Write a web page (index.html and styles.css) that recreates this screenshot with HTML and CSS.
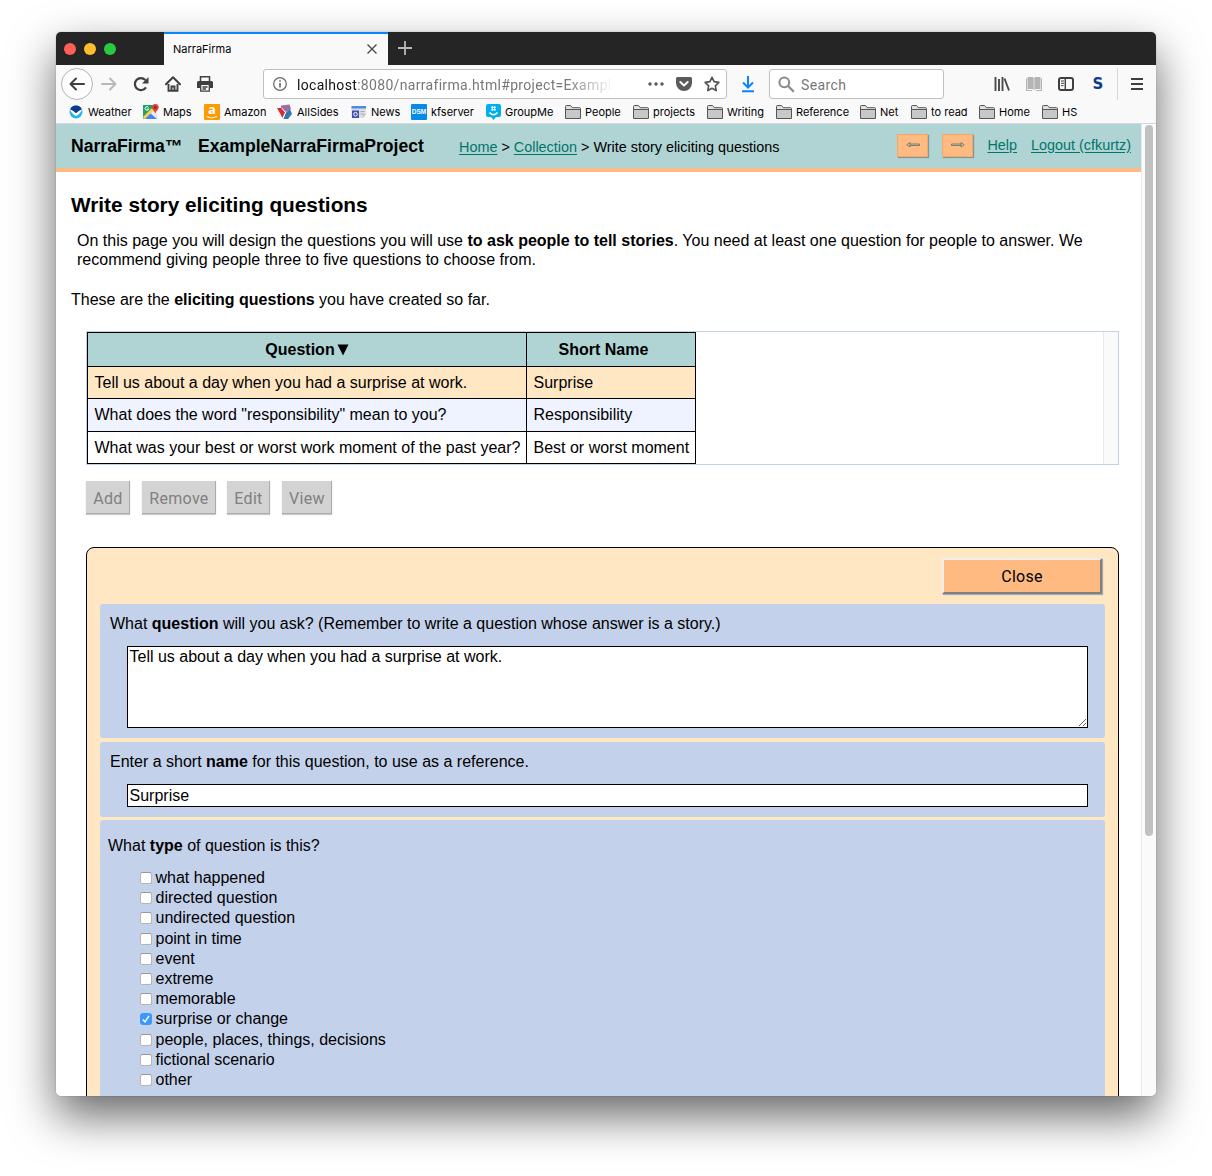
FILE: index.html
```html
<!DOCTYPE html>
<html lang="en">
<head>
<meta charset="utf-8">
<title>NarraFirma</title>
<link rel="stylesheet" href="styles.css">
</head>
<body>
<div class="window">
  <div class="tabbar">
    <div class="lights"><i class="red"></i><i class="yellow"></i><i class="green"></i></div>
    <div class="tab"><span>NarraFirma</span>
      <svg width="12" height="12" viewBox="0 0 12 12"><path d="M1.500 1.500l9 9m0-9l-9 9" stroke="#4a4a4a" stroke-width="1.400"/></svg>
    </div>
    <svg class="plus" width="14" height="14" viewBox="0 0 14 14"><path d="M7 0v14M0 7h14" stroke="#b9b9b9" stroke-width="1.800"/></svg>
  </div>

  <div class="toolbar">
    <div class="nav">
      <span class="back"><svg width="16" height="16" viewBox="0 0 16 16" fill="none" stroke="#3f3f3f" stroke-width="2" stroke-linecap="round" stroke-linejoin="round"><path d="M15 8H1.500M7 2.500L1.500 8 7 13.500"/></svg></span>
      <svg width="16" height="16" viewBox="0 0 16 16" fill="none" stroke="#b8b8b8" stroke-width="2" stroke-linecap="round" stroke-linejoin="round"><path d="M1 8h13.500M9 2.500L14.500 8 9 13.500"/></svg>
      <svg width="16" height="16" viewBox="0 0 16 16"><path d="M13 11.300A6 6 0 1 1 12.300 4" fill="none" stroke="#3f3f3f" stroke-width="2.200"/><path d="M15.500 1v6.500H9z" fill="#3f3f3f"/></svg>
      <svg width="16" height="16" viewBox="0 0 16 16"><path d="M1 8.300L8 1.300l7 7" fill="none" stroke="#3f3f3f" stroke-width="2" stroke-linecap="round" stroke-linejoin="round"/><path d="M3.500 8v6.700h9V8M6.500 15v-4.500h3V15" fill="none" stroke="#3f3f3f" stroke-width="1.900"/></svg>
      <svg width="16" height="16" viewBox="0 0 16 16"><path d="M3.500 5V.800h9V5" fill="none" stroke="#3f3f3f" stroke-width="1.500"/><path d="M1.500 5h13A1.500 1.500 0 0 1 16 6.500V12h-3V9H3v3H0V6.500A1.500 1.500 0 0 1 1.500 5z" fill="#3f3f3f"/><path d="M3.700 9v6.200h8.600V9M5.500 11h5M5.500 13h3.500" fill="none" stroke="#3f3f3f" stroke-width="1.300"/></svg>
    </div>
    <div class="urlbar">
      <svg width="14" height="14" viewBox="0 0 14 14"><circle cx="7" cy="7" r="6.300" fill="none" stroke="#666" stroke-width="1.200"/><path d="M7 6v4.500M7 3.200v1.600" stroke="#666" stroke-width="1.600"/></svg>
      <div class="url"><b>localhost</b>:8080/narrafirma.html#project=Exampl</div>
      <svg class="dots" width="16" height="16" viewBox="0 0 16 16" fill="#555"><circle cx="2" cy="8" r="1.700"/><circle cx="8" cy="8" r="1.700"/><circle cx="14" cy="8" r="1.700"/></svg>
      <svg class="pocket" width="16" height="16" viewBox="0 0 16 16"><path d="M1.500 1h13A1.500 1.500 0 0 1 16 2.500V7A8 8 0 0 1 0 7V2.500A1.500 1.500 0 0 1 1.500 1z" fill="#5b5b5b"/><path d="M4.300 6L8 9.500 11.700 6" fill="none" stroke="#fff" stroke-width="1.900" stroke-linecap="round" stroke-linejoin="round"/></svg>
      <svg width="16" height="16" viewBox="0 0 16 16"><path d="M8 1.300l2.100 4.400 4.700.700-3.400 3.400.800 4.800L8 12.300l-4.200 2.300.800-4.800L1.200 6.400l4.700-.700z" fill="none" stroke="#555" stroke-width="1.700" stroke-linejoin="round"/></svg>
    </div>
    <svg class="download" width="14" height="18" viewBox="0 0 14 18"><path d="M7 1v11M2 7.500l5 5 5-5M1 16.200h12" fill="none" stroke="#0a84ff" stroke-width="2"/></svg>
    <div class="search">
      <svg width="17" height="17" viewBox="0 0 17 17"><circle cx="6.300" cy="6.300" r="4.900" fill="none" stroke="#8a8a8a" stroke-width="2"/><path d="M10 10l5.800 5.800" stroke="#8a8a8a" stroke-width="2.200"/></svg>
      <span>Search</span>
    </div>
    <div class="tools">
      <svg width="16" height="16" viewBox="0 0 16 16"><path d="M1.500 1v14M5 3v12M8.500 1v14M10.500 2.500l4.500 12" stroke="#4a4a4a" stroke-width="1.900"/></svg>
      <svg width="16" height="16" viewBox="0 0 16 16" fill="#b4b4b4"><path d="M1.500 1h5L8 2l1.500-1h5v12H9.500L8 14.500 6.500 13h-5zM0 2.500h1V14h5v1H0zM16 2.500h-1V14h-5v1h6z"/><path d="M7.600 2.500h.800v12h-.800z" fill="#eee"/></svg>
      <svg width="16" height="16" viewBox="0 0 16 16"><rect x="1" y="2" width="14" height="12" rx="2" fill="none" stroke="#3f3f3f" stroke-width="2"/><path d="M7.300 2v12" stroke="#3f3f3f" stroke-width="1.400"/><path d="M3 5h3M3 7.300h3M3 9.600h2.500" stroke="#3f3f3f"/></svg>
      <span class="ess">S</span>
    </div>
    <svg class="menu" width="12" height="14" viewBox="0 0 12 14"><path d="M0 2h12M0 7h12M0 12h12" stroke="#3f3f3f" stroke-width="2"/></svg>
  </div>

  <svg width="0" height="0" class="defs"><symbol id="folder" viewBox="0 0 16 14"><path d="M.500 13.500V1.500a1 1 0 0 1 1-1h4l1.700 2.200h7.300a1 1 0 0 1 1 1v9.800z" fill="#c8c8c8" stroke="#565656"/><path d="M1 4.500h14" stroke="#565656"/><path d="M1.200 1.200h4.200l1.600 2.200h8v.600H1z" fill="#e3e3e3"/></symbol></svg>
  <div class="bookmarks">
    <div><svg width="14" height="14" viewBox="0 0 14 14"><circle cx="7" cy="7" r="6.500" fill="#25b4ea"/><path d="M1 4.500A6.500 6.500 0 0 1 13 4.500Q10 9 7 8 4 9 1 4.500z" fill="#0b3d8c"/><path d="M.800 4.300q3.200 1 6.200 4 3-3 6.200-4-1.700 4.700-6.200 6.700Q2.500 9 .800 4.300z" fill="#fff"/></svg>Weather</div>
    <div><svg width="16" height="16" viewBox="0 0 16 16"><path d="M0 1h12v14H0z" fill="#1fa463"/><path d="M0 15L12 3l3 12z" fill="#e8eaed"/><path d="M1 15l6-6 7 6z" fill="#4285f4"/><path d="M0 13l9-9 2 2-9 9z" fill="#ffd04b"/><path d="M12.300 0a3.500 3.500 0 0 1 3.400 3.600c0 2.200-2.600 3.400-3.400 6-.800-2.600-3.300-3.800-3.300-6A3.400 3.400 0 0 1 12.300 0z" fill="#db4437"/><circle cx="12.300" cy="3.500" r="1.200" fill="#7b231d"/><path d="M5.500 3.500A1.800 1.800 0 1 0 5.700 5H4" fill="none" stroke="#fff"/></svg>Maps</div>
    <div><span class="fav amazon">a<svg width="12" height="3" viewBox="0 0 12 3"><path d="M.500.500q5 3 10.500 0" fill="none" stroke="#fff"/></svg></span>Amazon</div>
    <div><svg width="16" height="16" viewBox="0 0 16 16"><path d="M4 1.500L12.500 .500 14 5 9 8 4 4z" fill="#9e6aa7"/><path d="M0 4l4.500 0L8 8.500 5.500 14z" fill="#d92b32"/><path d="M8.500 9l4.500-4 2 5-4 5H6.500z" fill="#3277b5"/><path d="M4.300 3.500L8.500 8.500 6 14.500" fill="none" stroke="#fff" stroke-width=".8"/></svg>AllSides</div>
    <div><svg width="16" height="16" viewBox="0 0 16 16"><path d="M.500 3h14.500v7l-3 4H.500z" fill="#dedede"/><path d="M.500 2h14.500v2.500H.500z" fill="#4f86ec"/><path d="M1 6.500h7V14H1z" fill="#3f51b5"/><circle cx="4.500" cy="10.200" r="1.800" fill="none" stroke="#fff"/><path d="M9.500 7.500h4M9.500 10h3" stroke="#aaa"/><path d="M15 10l-3 .500V14z" fill="#bbb"/></svg>News</div>
    <div><span class="fav dsm">DSM</span>kfserver</div>
    <div><svg width="15" height="16" viewBox="0 0 15 16"><path d="M2 0h11a2 2 0 0 1 2 2v9a2 2 0 0 1-2 2h-3l-2.500 3L5 13H2a2 2 0 0 1-2-2V2a2 2 0 0 1 2-2z" fill="#00aff0"/><path d="M6.300 2v5M8.700 2v5M5 3.300h5M5 5.700h5" stroke="#fff" stroke-width=".9"/><path d="M3.500 8.500Q7.500 13 11.500 8.500" fill="none" stroke="#fff" stroke-width="1.600"/></svg>GroupMe</div>
    <div><svg width="16" height="14"><use href="#folder"/></svg>People</div>
    <div><svg width="16" height="14"><use href="#folder"/></svg>projects</div>
    <div><svg width="16" height="14"><use href="#folder"/></svg>Writing</div>
    <div><svg width="16" height="14"><use href="#folder"/></svg>Reference</div>
    <div><svg width="16" height="14"><use href="#folder"/></svg>Net</div>
    <div><svg width="16" height="14"><use href="#folder"/></svg>to read</div>
    <div><svg width="16" height="14"><use href="#folder"/></svg>Home</div>
    <div><svg width="16" height="14"><use href="#folder"/></svg>HS</div>
  </div>

  <div class="viewport">
    <div class="page">
      <header class="header">
        <span class="brand">NarraFirma™</span>
        <span class="project">ExampleNarraFirmaProject</span>
        <span class="crumbs"><a>Home</a> &gt; <a>Collection</a> &gt; Write story eliciting questions</span>
        <div class="actions">
          <button class="arrow"><svg width="14" height="6" viewBox="0 0 14 6"><path d="M4 2h9.500v1.500H4M4 .500v4.500L.800 2.800z" fill="none" stroke="#4b7770" stroke-width=".8"/></svg></button>
          <button class="arrow"><svg width="14" height="6" viewBox="0 0 14 6"><path d="M10 2H.500v1.500H10M10 .500v4.500l3.200-2.200z" fill="none" stroke="#4b7770" stroke-width=".8"/></svg></button>
          <a class="help">Help</a>
          <a>Logout (cfkurtz)</a>
        </div>
      </header>
      <main>
        <h1>Write story eliciting questions</h1>
        <p class="intro">On this page you will design the questions you will use <b>to ask people to tell stories</b>. You need at least one question for people to answer. We<br>recommend giving people three to five questions to choose from.</p>
        <p class="lead">These are the <b>eliciting questions</b> you have created so far.</p>
        <div class="grid">
          <table>
            <tr class="head"><th>Question<svg width="12" height="12" viewBox="0 0 12 12"><path d="M.500 .500h11L6 11.500z"/></svg></th><th class="short">Short Name</th></tr>
            <tr class="selected"><td>Tell us about a day when you had a surprise at work.</td><td>Surprise</td></tr>
            <tr class="odd"><td>What does the word "responsibility" mean to you?</td><td>Responsibility</td></tr>
            <tr class="last"><td>What was your best or worst work moment of the past year?</td><td>Best or worst moment</td></tr>
          </table>
          <div class="track"></div>
        </div>
        <div class="buttons">
          <button class="add">Add</button><button class="remove">Remove</button><button class="edit">Edit</button><button class="view">View</button>
        </div>
        <section class="panel">
          <button class="close">Close</button>
          <div class="field question">
            <label>What <b>question</b> will you ask? (Remember to write a question whose answer is a story.)</label>
            <textarea>Tell us about a day when you had a surprise at work.</textarea>
          </div>
          <div class="field name">
            <label>Enter a short <b>name</b> for this question, to use as a reference.</label>
            <input type="text" value="Surprise">
          </div>
          <div class="field type">
            <div>What <b>type</b> of question is this?</div>
            <ul>
              <li><i class="box"></i>what happened</li>
              <li><i class="box"></i>directed question</li>
              <li><i class="box"></i>undirected question</li>
              <li><i class="box"></i>point in time</li>
              <li><i class="box"></i>event</li>
              <li><i class="box"></i>extreme</li>
              <li><i class="box"></i>memorable</li>
              <li><i class="box on"><svg width="10" height="10" viewBox="0 0 10 10"><path d="M1.800 5.500l2.200 2.400 4-6" fill="none" stroke="#fff" stroke-width="1.500"/></svg></i>surprise or change</li>
              <li><i class="box"></i>people, places, things, decisions</li>
              <li><i class="box"></i>fictional scenario</li>
              <li><i class="box"></i>other</li>
            </ul>
          </div>
        </section>
      </main>
    </div>
    <div class="scrollbar"><div class="thumb"></div></div>
  </div>
</div>
</body>
</html>
```
FILE: styles.css
```css
* { box-sizing: border-box; }
body { margin: 0; height: 1176px; overflow: hidden; background: #fff; padding: 32px 56px 80px; font: 16px/19px "Liberation Sans", Arial, sans-serif; color: #000; }
svg { display: block; flex: none; }
button { font: 16px/19px Roboto, sans-serif; padding: 0; margin: 0; border: 0; border-radius: 0; }
.window { width: 1100px; height: 1064px; display: flex; flex-direction: column; border-radius: 5px; overflow: hidden; background: #f9f9f9; box-shadow: 0 0 1px rgba(0,0,0,.5), 0 20px 46px rgba(0,0,0,.6); }
.defs { position: absolute; }

.tabbar { height: 33px; flex: none; background: #252525; display: flex; align-items: center; }
.lights { width: 108px; padding-left: 8px; display: flex; gap: 8px; }
.lights i { width: 12px; height: 12px; border-radius: 50%; }
.red { background: #ff5f57; }
.yellow { background: #ffbd2e; }
.green { background: #28ca42; }
.tab { width: 224px; height: 33px; background: #f9f9f9; border-top: 2px solid #0a84ff; display: flex; align-items: center; justify-content: space-between; padding: 0 10px 1px 9px; font: 11px/14px Inter, sans-serif; }
.plus { margin: -1px 0 0 10px; }

.toolbar { height: 37px; flex: none; display: flex; align-items: center; padding-top: 1px; }
.nav { display: flex; align-items: center; gap: 16px; padding-left: 5px; width: 207px; }
.back { width: 32px; height: 32px; border: 1px solid #b5b5b5; border-radius: 50%; background: #fdfdfd; display: flex; align-items: center; justify-content: center; margin-right: -8px; }
.urlbar { width: 464px; height: 30px; border: 1px solid #c0c0c0; border-radius: 3px; background: #fff; display: flex; align-items: center; padding: 0 6px 0 9px; }
.url { width: 318px; margin-left: 10px; padding-top: 2px; font: 14px/18px Roboto, sans-serif; letter-spacing: .32px; color: #777; white-space: nowrap; -webkit-mask-image: linear-gradient(90deg, #000 85%, transparent 100%); }
.url b { font-weight: 400; color: #111; }
.dots { margin-left: 34px; }
.pocket { margin: 0 12px; }
.download { margin: 0 14px; }
.search { width: 175px; height: 30px; border: 1px solid #c0c0c0; border-radius: 3px; background: #fff; display: flex; align-items: center; padding-left: 8px; gap: 6px; font: 14px/18px Roboto, sans-serif; letter-spacing: .4px; color: #777; }
.search span { padding-top: 2px; }
.tools { display: flex; align-items: center; gap: 16px; height: 32px; width: 174px; padding-left: 50px; border-right: 1px solid #d8d8d8; }
.ess { width: 16px; text-align: center; color: #0b3c8c; font: bold 15px/16px "DejaVu Sans", sans-serif; }
.menu { margin-left: 13px; }

.bookmarks { height: 22px; flex: none; padding: 0 0 1px 13px; border-bottom: 1px solid #d5d9d9; display: grid; grid-template-columns: 74px 61px 73px 74px 60px 75px 79px 68px 74px 69px 84px 51px 68px 63px 40px; font: 11px/18px Inter, sans-serif; }
.bookmarks div { display: flex; align-items: center; gap: 4px; white-space: nowrap; }
.bookmarks div:first-child { gap: 5px; }
.fav { width: 16px; height: 16px; text-align: center; color: #fff; }
.amazon { background: #ff9900; font: bold 13px/11px "Open Sans", sans-serif; border-radius: 1px; }
.amazon svg { margin: 1px auto 0; }
.dsm { background: #078ae8; font: bold 6.500px/16px "Liberation Sans", sans-serif; border-radius: 1px; }

.viewport { flex: 1; min-height: 0; display: flex; }
.page { width: 1085px; background: #fff; overflow: hidden; }
.scrollbar { width: 15px; background: #fafafa; border-left: 1px solid #e8e8e8; padding: 1px 3px; }
.thumb { width: 8px; height: 711px; border-radius: 4px; background: #c1c1c1; }
.header { height: 48px; background: #b0d4d4; border-bottom: 4px solid #ffba82; display: flex; align-items: center; padding: 1px 10px 0 15px; white-space: nowrap; }
.brand { font-size: 17.600px; font-weight: bold; width: 127px; }
.project { font-size: 17.600px; font-weight: bold; width: 261px; }
.crumbs { font-size: 14.400px; padding-top: 1px; }
.header a { color: #00766c; text-decoration: underline; text-underline-offset: 2px; }
.actions { margin-left: auto; display: flex; align-items: center; font-size: 14.400px; margin-top: -3px; }
.arrow { width: 31px; height: 23px; margin-right: 14px; background: #ffba82; border: 1px solid #f5a76a; box-shadow: 1px 1px 1px #7f9999; display: flex; align-items: center; justify-content: center; }
.help { margin-right: 14px; }
main { padding: 0 22px 0 15px; }
h1 { margin: 21px 0 0; font-size: 20.800px; line-height: 24px; }
.intro { margin: 14px 0 0 6px; white-space: nowrap; }
.lead { margin: 21px 0 0; }
.grid { margin: 22px 0 0 15px; height: 134px; border: 1px solid #c5d1ea; display: flex; justify-content: space-between; }
table { border-collapse: collapse; width: 609px; height: 132px; table-layout: fixed; }
th, td { border: 1px solid #000; padding: 0 0 0 6.500px; text-align: left; white-space: nowrap; }
th { width: 439px; padding: 0; text-align: center; }
th svg { display: inline; margin: 0 0 -1px 2px; }
th.short { width: 169px; padding-right: 15px; }
.head { height: 34px; background: #b0d4d4; }
.selected { height: 32px; background: #ffe7c4; }
.odd { height: 33px; background: #eff3ff; }
.odd td { padding-bottom: 2px; }
.last { height: 32px; }
.track { width: 15px; background: #fafafa; border-left: 1px solid #e8e8e8; }
.buttons { margin: 16px 0 0 15px; display: flex; height: 33px; }
.buttons button { background: #d3d3d3; color: #808080; box-shadow: inset -1px -1px #aaa, 0 1px 1px #ccc; letter-spacing: .3px; padding-top: 2px; }
.add { width: 44px; margin-right: 12px; }
.remove { width: 74px; margin-right: 11px; }
.edit { width: 43px; margin-right: 12px; }
.view { width: 50px; }
.panel { margin: 33px 0 0 15px; height: 700px; border: 1px solid #000; border-radius: 8px; background: #ffe7c4; padding: 10px 13px; display: flex; flex-direction: column; }
.close { width: 160px; height: 36px; align-self: flex-end; margin: 0 3px 1px 0; background: #ffba82; border: 2px solid; border-color: #eee #808080 #808080 #eee; box-shadow: 1px 1px 1px #aaa; letter-spacing: .25px; padding-top: 1px; }
.field { background: #c4d1eb; border-radius: 3px; flex: none; }
.field label { display: block; }
.question { margin-top: 9px; height: 134px; padding: 10px 17px 10px 10px; }
.name { margin-top: 4px; height: 75px; padding: 10px 17px 10px 10px; }
textarea, input { display: block; margin: 13px 0 0 17px; width: 961px; border: 1px solid #000; border-radius: 0; padding: 1px 1.500px; font: 16px/18px "Liberation Sans", sans-serif; background: #fff; color: #000; }
textarea { height: 82px; }
input { height: 23px; }
.type { margin-top: 3px; height: 400px; padding: 16px 8px; }
ul { list-style: none; margin: 13px 0 0; padding: 0 0 0 32px; }
li { height: 20.200px; line-height: 20.200px; display: flex; align-items: center; gap: 3.500px; }
.box { width: 12px; height: 12px; border-radius: 2.500px; background: #fff; border: 1px solid #b5b5b5; border-top-color: #999; }
.on { background: #3b99fc; border-color: #3b99fc; }
```
